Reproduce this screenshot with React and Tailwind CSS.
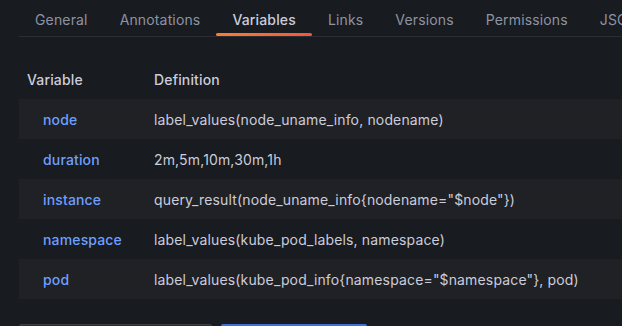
import React from "react";

const tabs = ["General", "Annotations", "Variables", "Links", "Versions", "Permissions", "JSON Model"];
const rows = [
  ["node", "label_values(node_uname_info, nodename)"],
  ["duration", "2m,5m,10m,30m,1h"],
  ["instance", 'query_result(node_uname_info{nodename="$node"})'],
  ["namespace", "label_values(kube_pod_labels, namespace)"],
  ["pod", 'label_values(kube_pod_info{namespace="$namespace"}, pod)'],
];

export default function App() {
  return (
    <div
      className="w-[622px] h-[326px] overflow-hidden bg-[#181b1f] text-[#ccccdc] text-[14px] tracking-[0.15px]"
      style={{ fontFamily: "Inter, 'Noto Sans', sans-serif" }}
    >
      <div className="pl-[19px] w-[900px]">
        <div className="flex h-[37px] border-b border-[#2a2d33]">
          {tabs.map((t, i) => (
            <div
              key={t}
              className={
                "relative flex items-center px-4 pt-[3px] whitespace-nowrap " +
                (i === 2 ? "text-[#ccccdc] font-medium" : "text-[#8e93a3]")
              }
            >
              {t}
              {i === 2 && (
                <div className="absolute left-0 right-0 bottom-[0px] h-[3px] rounded-sm bg-gradient-to-r from-[#f77f32] to-[#f5543b]" />
              )}
            </div>
          ))}
        </div>
        <div className="grid grid-cols-[127px_1fr] h-[62px] items-center pt-[22px] font-medium">
          <div className="pl-2">Variable</div>
          <div className="pl-2">Definition</div>
        </div>
        <div>
          {rows.map(([n, d], i) => (
            <div
              key={n}
              className={
                "grid grid-cols-[127px_1fr] h-[40px] items-center " +
                (i % 2 === 0 ? "bg-[#1f2125]" : "")
              }
            >
              <div className="pl-6 text-[#6e9fff] font-medium">{n}</div>
              <div className="pl-2 whitespace-nowrap">{d}</div>
            </div>
          ))}
        </div>
        <div className="flex gap-[9px] mt-[25px]">
          <div className="w-[193px] h-[32px] rounded-[2px] bg-[#2b2e34] border border-[#3a3d44]" />
          <div className="w-[146px] h-[32px] rounded-[2px] bg-[#3d71d9]" />
        </div>
      </div>
    </div>
  );
}
